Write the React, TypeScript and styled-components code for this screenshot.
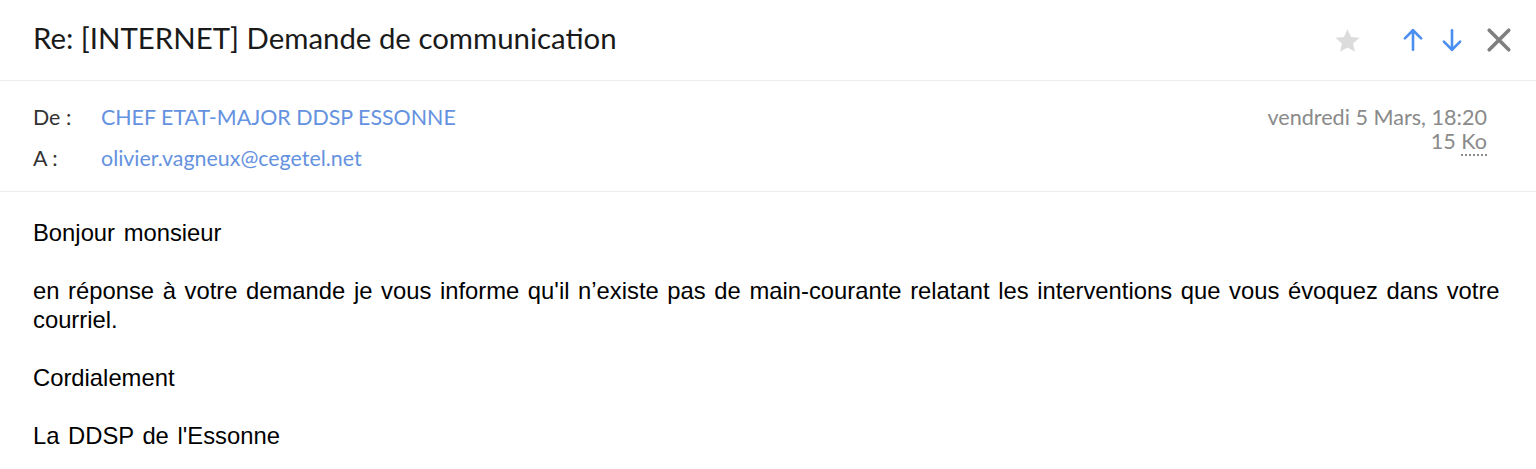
import React from 'react';
import styled, { createGlobalStyle } from 'styled-components';

const GlobalStyle = createGlobalStyle`
    body {
        margin: 0;
        background: #fff;
    }
`;

const Page = styled.div`
    width: 1536px;
    font-family: 'Lato', 'Liberation Sans', sans-serif;
    color: #111;
`;

const Header = styled.div`
    display: flex;
    align-items: center;
    justify-content: space-between;
    height: 81px;
    padding: 0 22px 0 33px;
    border-bottom: 1px solid #ececec;
    box-sizing: border-box;
`;

const Subject = styled.h1`
    margin: 0;
    font-size: 29.4px;
    font-weight: 400;
    color: #1a1a1a;
    padding-bottom: 6px;
`;

const Actions = styled.div`
    display: flex;
    align-items: center;
`;

const IconButton = styled.button<{ $gap?: number }>`
    display: flex;
    align-items: center;
    justify-content: center;
    width: 30px;
    height: 30px;
    padding: 0;
    margin-left: ${(p) => p.$gap ?? 0}px;
    border: none;
    background: none;
    cursor: pointer;
`;

const Meta = styled.div`
    display: flex;
    justify-content: space-between;
    align-items: flex-start;
    padding: 23px 49px 0 33px;
    height: 111px;
    border-bottom: 1px solid #ececec;
    box-sizing: border-box;
`;

const MetaGrid = styled.div`
    display: grid;
    grid-template-columns: 68px auto;
    row-gap: 14px;
    font-size: 21.4px;
    line-height: 27px;
`;

const Label = styled.span`
    color: #333;
`;

const Value = styled.span`
    color: #6592e0;
`;

const Info = styled.div`
    display: flex;
    flex-direction: column;
    align-items: flex-end;
    font-size: 21.6px;
    line-height: 24px;
    color: #8a8a8a;
    padding-top: 1px;
`;

const Unit = styled.abbr`
    text-decoration: none;
    border-bottom: 2px dotted #8a8a8a;
    line-height: 20px;
`;

const Body = styled.div`
    padding: 26px 33px 0 33px;
    font-family: 'Liberation Sans', sans-serif;
    font-size: 23.8px;
    line-height: 29px;
    word-spacing: 2px;
    color: #000;
`;

const Para = styled.p`
    margin: 0 0 29px 0;
`;

const Star = () => (
    <svg width="29" height="29" viewBox="0 0 24 24">
        <path
            d="M12 2.5l2.9 6.6 7.1.6-5.4 4.7 1.6 7-6.2-3.7-6.2 3.7 1.6-7L2 9.7l7.1-.6z"
            fill="#dcdcdc"
        />
    </svg>
);

const Arrow = ({ up }: { up?: boolean }) => (
    <svg width="26" height="26" viewBox="0 0 24 24" fill="none" stroke="#4a8ef0" strokeWidth="2.4" strokeLinecap="round" strokeLinejoin="round">
        {up ? (
            <>
                <path d="M12 21V3" />
                <path d="M4.5 10.5L12 3l7.5 7.5" />
            </>
        ) : (
            <>
                <path d="M12 3v18" />
                <path d="M4.5 13.5L12 21l7.5-7.5" />
            </>
        )}
    </svg>
);

const Close = () => (
    <svg width="26" height="26" viewBox="0 0 24 24" fill="none" stroke="#7f7f7f" strokeWidth="3.4" strokeLinecap="round">
        <path d="M3 3l18 18M21 3L3 21" />
    </svg>
);

const App = (): JSX.Element => {
    return (
        <Page>
            <GlobalStyle />
            <Header>
                <Subject>Re: [INTERNET] Demande de communication</Subject>
                <Actions>
                    <IconButton>
                        <Star />
                    </IconButton>
                    <IconButton $gap={36}>
                        <Arrow up />
                    </IconButton>
                    <IconButton $gap={9}>
                        <Arrow />
                    </IconButton>
                    <IconButton $gap={17}>
                        <Close />
                    </IconButton>
                </Actions>
            </Header>
            <Meta>
                <MetaGrid>
                    <Label>De :</Label>
                    <Value>CHEF ETAT-MAJOR DDSP ESSONNE</Value>
                    <Label>A :</Label>
                    <Value>olivier.vagneux@cegetel.net</Value>
                </MetaGrid>
                <Info>
                    <span>vendredi 5 Mars, 18:20</span>
                    <span>
                        15 <Unit title="kilo-octets">Ko</Unit>
                    </span>
                </Info>
            </Meta>
            <Body>
                <Para>Bonjour monsieur</Para>
                <Para>
                    en réponse à votre demande je vous informe qu'il n’existe pas de main-courante
                    relatant les interventions que vous évoquez dans votre courriel.
                </Para>
                <Para>Cordialement</Para>
                <Para>La DDSP de l'Essonne</Para>
            </Body>
        </Page>
    );
};

export default App;
